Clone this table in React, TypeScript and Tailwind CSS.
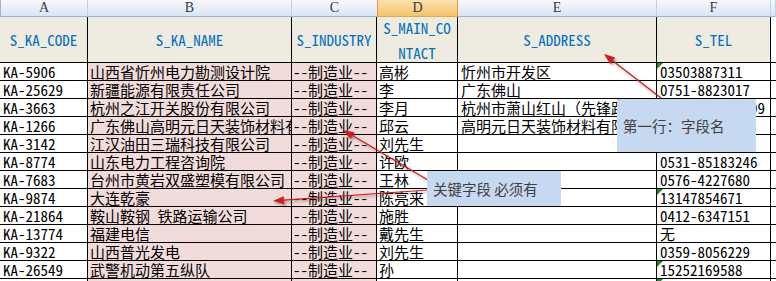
import React from 'react'

const MONO = "'Noto Sans Mono CJK SC', 'Noto Sans CJK SC', monospace"

type Row = {
  code: string
  name: string
  contact: string
  address: string
  tel: string
  flag?: boolean
}

const rows: Row[] = [
  { code: 'KA-5906', name: '山西省忻州电力勘测设计院', contact: '高彬', address: '忻州市开发区', tel: '03503887311', flag: true },
  { code: 'KA-25629', name: '新疆能源有限责任公司', contact: '李', address: '广东佛山', tel: '0751-8823017' },
  { code: 'KA-3663', name: '杭州之江开关股份有限公司', contact: '李月', address: '杭州市萧山红山（先锋路口）', tel: '0571-826966999' },
  { code: 'KA-1266', name: '广东佛山高明元日天装饰材料有限公司', contact: '邱云', address: '高明元日天装饰材料有限公司', tel: '' },
  { code: 'KA-3142', name: '江汉油田三瑞科技有限公司', contact: '刘先生', address: '', tel: '' },
  { code: 'KA-8774', name: '山东电力工程咨询院', contact: '许欧', address: '', tel: '0531-85183246' },
  { code: 'KA-7683', name: '台州市黄岩双盛塑模有限公司', contact: '王林', address: '', tel: '0576-4227680' },
  { code: 'KA-9874', name: '大连乾豪', contact: '陈亮来', address: '', tel: '13147854671', flag: true },
  { code: 'KA-21864', name: '鞍山鞍钢 铁路运输公司', contact: '施胜', address: '', tel: '0412-6347151' },
  { code: 'KA-13774', name: '福建电信', contact: '戴先生', address: '', tel: '无' },
  { code: 'KA-9322', name: '山西普光发电', contact: '刘先生', address: '', tel: '0359-8056229' },
  { code: 'KA-26549', name: '武警机动第五纵队', contact: '孙', address: '', tel: '15252169588', flag: true },
  { code: '', name: '', contact: '', address: '', tel: '', flag: true },
]

const letters = ['A', 'B', 'C', 'D', 'E', 'F', '']

// arrow: line + filled head at (x2, y2)
function Arrow({ x1, y1, x2, y2 }: { x1: number; y1: number; x2: number; y2: number }) {
  const dx = x2 - x1
  const dy = y2 - y1
  const len = Math.hypot(dx, dy)
  const ux = dx / len
  const uy = dy / len
  const bx = x2 - ux * 11
  const by = y2 - uy * 11
  const px = -uy * 4
  const py = ux * 4
  return (
    <g filter="url(#shadow)">
      <line x1={x1} y1={y1} x2={bx} y2={by} stroke="#d11a1a" strokeWidth="1.2" />
      <polygon points={`${x2},${y2} ${bx + px},${by + py} ${bx - px},${by - py}`} fill="#d11a1a" />
    </g>
  )
}

function Flag() {
  return <span className="absolute left-0 top-0 h-0 w-0 border-t-[6px] border-r-[6px] border-t-[#1e8c1e] border-r-transparent" />
}

export default function App() {
  return (
    <div className="relative h-[281px] w-[776px] overflow-hidden bg-white" style={{ fontFamily: MONO }}>
      <div className="grid grid-cols-[88px_204px_85px_81px_199px_114px_1fr]">
        {/* column letters */}
        {letters.map((l, i) => (
          <div
            key={'h' + i}
            className={
              i === 3
                ? "flex h-[17px] items-center justify-center border-b border-r border-l border-b-[#e5a94a] border-r-[#f29436] border-l-[#f29436] bg-linear-to-b from-[#fbe2ae] to-[#f3c565] font-['Liberation_Serif'] text-[14px] leading-[16px] text-[#2f3d4c]"
                : i === 2
                  ? "flex h-[17px] items-center justify-center border-b border-b-[#9eb6ce] bg-linear-to-b from-[#f7f9fc] to-[#dae4f2] font-['Liberation_Serif'] text-[14px] leading-[16px] text-[#2f3d4c]"
                  : i === 0
                    ? "flex h-[17px] items-center justify-center border-b border-r border-l border-b-[#9eb6ce] border-r-[#c2d0e2] border-l-[#9eb6ce] bg-linear-to-b from-[#f7f9fc] to-[#dae4f2] font-['Liberation_Serif'] text-[14px] leading-[16px] text-[#2f3d4c]"
                    : "flex h-[17px] items-center justify-center border-b border-r border-b-[#9eb6ce] border-r-[#c2d0e2] bg-linear-to-b from-[#f7f9fc] to-[#dae4f2] font-['Liberation_Serif'] text-[14px] leading-[16px] text-[#2f3d4c]"
            }
          >
            {l}
          </div>
        ))}

        {/* field names */}
        {['S_KA_CODE', 'S_KA_NAME', 'S_INDUSTRY', 'S_MAIN_CONTACT', 'S_ADDRESS', 'S_TEL'].map((f) => (
          <div
            key={f}
            className="flex h-[46px] items-center justify-center break-all border-b border-r border-black bg-[#eeece1] px-[4px] text-center text-[15px] leading-[25px] text-[#0070c0]"
          >
            {f}
          </div>
        ))}
        <div className="h-[46px] border-b border-black" />

        {/* data */}
        {rows.map((r, i) => (
          <React.Fragment key={i}>
            <div className="h-[18px] overflow-hidden whitespace-nowrap border-b border-r border-black pl-[3px] text-[15px] leading-[18px]">{r.code}</div>
            <div className="h-[18px] overflow-hidden whitespace-nowrap border-b border-r border-black bg-[#f2dcdb] pl-[2px] text-[15px] leading-[18px]">{r.name}</div>
            <div className="h-[18px] overflow-hidden whitespace-nowrap border-b border-r border-black bg-[#f2dcdb] pl-[1px] text-[15px] leading-[18px]">{r.code ? '--制造业--' : ''}</div>
            <div className="h-[18px] overflow-hidden whitespace-nowrap border-b border-r border-black pl-[2px] text-[15px] leading-[18px]">{r.contact}</div>
            <div className="h-[18px] overflow-hidden whitespace-nowrap border-b border-r border-black pl-[3px] text-[15px] leading-[18px]">{r.address}</div>
            <div className="relative h-[18px] overflow-hidden whitespace-nowrap border-b border-r border-black pl-[3px] text-[15px] leading-[18px]">
              {r.flag && <Flag />}
              {r.tel}
            </div>
            <div className="h-[18px] border-b border-black" />
          </React.Fragment>
        ))}
      </div>

      {/* annotation arrows */}
      <svg className="pointer-events-none absolute left-0 top-0" width="776" height="281">
        <defs>
          <filter id="shadow" x="-20%" y="-20%" width="140%" height="140%">
            <feDropShadow dx="1.5" dy="2" stdDeviation="1.2" floodColor="#000" floodOpacity="0.35" />
          </filter>
        </defs>
        <Arrow x1={661} y1={98} x2={604} y2={54} />
        <Arrow x1={428} y1={180} x2={343} y2={130} />
        <Arrow x1={428} y1={190} x2={273} y2={201} />
      </svg>

      {/* callouts */}
      <div className="absolute left-[617px] top-[99px] flex h-[53px] w-[139px] items-center bg-[#c6d9f1] pl-[6px] text-[14.5px] text-[#404040]" style={{ fontFamily: "'Noto Sans CJK SC', sans-serif" }}>
        第一行：字段名
      </div>
      <div className="absolute left-[427px] top-[171px] flex h-[35px] w-[134px] items-center bg-[#c6d9f1] pl-[6px] text-[14.5px] text-[#404040]" style={{ fontFamily: "'Noto Sans CJK SC', sans-serif" }}>
        关键字段 必须有
      </div>
    </div>
  )
}
